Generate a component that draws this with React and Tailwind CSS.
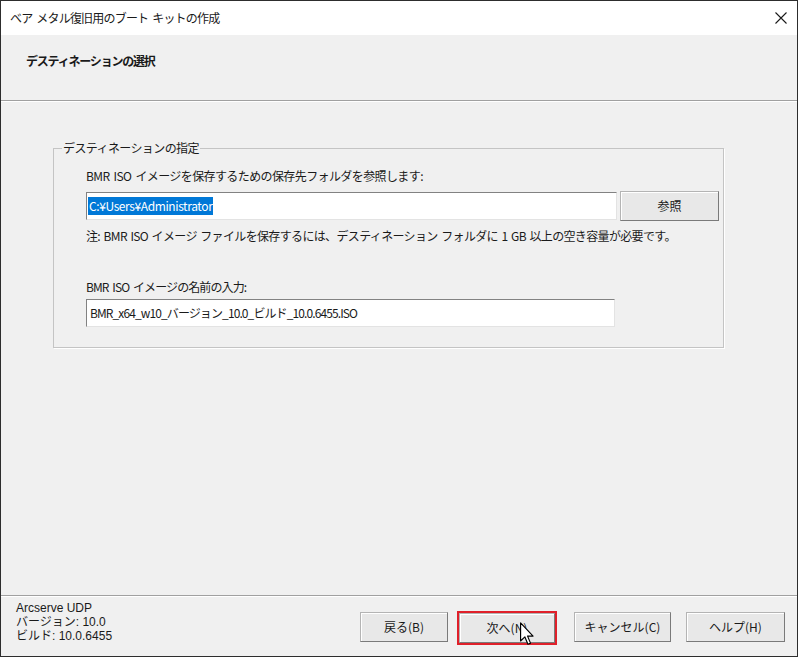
import React from "react";

const font = { fontFamily: '"Noto Sans CJK JP", "Noto Sans", sans-serif' };
const footerFont = { fontFamily: '"Liberation Sans", "Noto Sans CJK JP", sans-serif' };

// classic raised dialog button
const DialogButton = ({ label, className = "" }) => (
  <button
    className={`h-[30px] bg-[#e8e8e8] border border-[#b4b4b4] border-r-[#7a7a7a] border-b-[#7a7a7a] shadow-[inset_1px_1px_0_#ffffff] text-[12px] text-[#1a1a1a] ${className}`}
  >
    {label}
  </button>
);

const Cursor = () => (
  <svg width="14" height="24" viewBox="0 0 12 20" className="absolute left-[61px] top-[9px]">
    <path
      d="M0.5 0.5 L0.5 16 L4.2 12.5 L6.8 18.8 L9 17.8 L6.5 11.8 L11.2 11.8 Z"
      fill="#ffffff"
      stroke="#000000"
      strokeWidth="1"
      strokeLinejoin="round"
    />
  </svg>
);

export default function App() {
  return (
    <div style={font} className="w-[798px] h-[657px] flex flex-col border border-[#2d2d2d] bg-[#f0f0f0] text-[#1a1a1a]">
      {/* Title bar */}
      <div className="h-[34px] bg-white flex items-center justify-between pl-[9px] pr-[9px]">
        <span className="text-[12px] tracking-[-0.8px] [word-spacing:2px]">ベア メタル復旧用のブート キットの作成</span>
        <svg width="12" height="12" viewBox="0 0 12 12" className="mr-[1px]">
          <path d="M0.5 0.5 L11.5 11.5 M11.5 0.5 L0.5 11.5" stroke="#1a1a1a" strokeWidth="1.1" />
        </svg>
      </div>

      {/* Header */}
      <div className="h-[65px] pl-[25px] pt-[12px]">
        <span className="text-[12px] font-bold tracking-[-1.2px]">デスティネーションの選択</span>
      </div>
      <div className="h-[2px] border-t border-[#a0a0a0] bg-white" />

      {/* Body */}
      <div className="flex-1 pt-[37px] pl-[52px]">
        <fieldset className="w-[671px] h-[209px] border border-[#c4c4c4] shadow-[1px_1px_0_#ffffff]">
          <legend className="ml-[8px] px-[1px] text-[12px] tracking-[-0.6px]">デスティネーションの指定</legend>
          <div className="pl-[32px]">
            <div className="pt-[11px] text-[12px] tracking-[-0.6px] [word-spacing:2px] leading-[16px]">
              BMR ISO イメージを保存するための保存先フォルダを参照します:
            </div>
            <div className="flex items-center mt-[7px]">
              <div className="w-[531px] h-[28px] bg-white border border-[#828282] border-r-[#e3e3e3] border-b-[#e3e3e3] flex items-center pl-[1px]">
                <span className="bg-[#0078d7] text-white text-[12px] tracking-[-0.4px] leading-[18px] px-[1px]">C:¥Users¥Administrator</span>
              </div>
              <DialogButton label="参照" className="ml-[3px] w-[99px] h-[29px]" />
            </div>
            <div className="mt-[7px] text-[12px] tracking-[-0.65px] [word-spacing:1.5px] leading-[16px]">
              注: BMR ISO イメージ ファイルを保存するには、デスティネーション フォルダに 1 GB 以上の空き容量が必要です。
            </div>
            <div className="mt-[35px] text-[12px] tracking-[-0.9px] [word-spacing:2px] leading-[16px]">BMR ISO イメージの名前の入力:</div>
            <div className="mt-[4px] w-[529px] h-[28px] bg-white border border-[#828282] border-r-[#e3e3e3] border-b-[#e3e3e3] flex items-center pl-[3px]">
              <span className="text-[12px] tracking-[-0.9px]">BMR_x64_w10_バージョン_10.0_ビルド_10.0.6455.ISO</span>
            </div>
          </div>
        </fieldset>
      </div>

      {/* Footer */}
      <div className="h-[2px] border-t border-[#a0a0a0] bg-white" />
      <div className="h-[59px] flex items-start pl-[15px] pr-[12px]">
        <div style={footerFont} className="pt-[4px] text-[12px] leading-[14px]">
          <div>Arcserve UDP</div>
          <div>バージョン: 10.0</div>
          <div>ビルド: 10.0.6455</div>
        </div>
        <div className="ml-auto flex items-start pt-[15px]">
          <DialogButton label="戻る(B)" className="w-[88px]" />
          <div className="relative ml-[9px] border-2 border-[#e0202a] -mt-[1px]">
            <DialogButton label="次へ(N)" className="w-[96px]" />
            <Cursor />
          </div>
          <DialogButton label="キャンセル(C)" className="ml-[17px] w-[97px]" />
          <DialogButton label="ヘルプ(H)" className="ml-[15px] w-[99px]" />
        </div>
      </div>
    </div>
  );
}
